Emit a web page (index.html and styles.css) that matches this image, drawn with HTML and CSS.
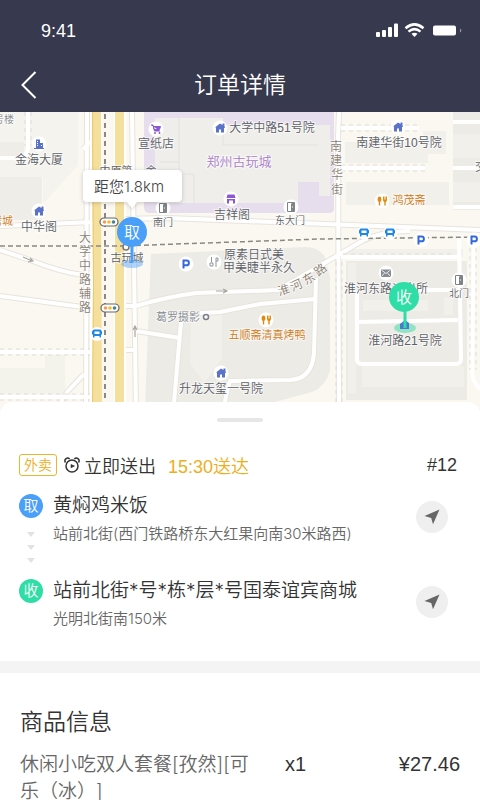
FILE: index.html
```html
<!DOCTYPE html>
<html lang="zh-CN">
<head>
<meta charset="utf-8">
<meta name="viewport" content="width=device-width, initial-scale=1">
<title>订单详情</title>
<link rel="stylesheet" href="styles.css">
</head>
<body>
<div class="app">
  <header class="top">
    <div class="status">
      <span class="time">9:41</span>
      <svg class="signals" width="86" height="16" viewBox="0 0 86 16" aria-hidden="true">
        <g fill="#fff">
          <rect x="0" y="9" width="4" height="5" rx="1"/>
          <rect x="6" y="7" width="4" height="7" rx="1"/>
          <rect x="12" y="4" width="4" height="10" rx="1"/>
          <rect x="18" y="0.500" width="4" height="13.500" rx="1"/>
          <rect x="57" y="2.500" width="23" height="10" rx="2"/>
          <path d="M84 5.500Q86.500 7.500 84 9.500z" opacity=".5"/>
          <path d="M38.500 14l-3-3.200q3-2 6 0z"/>
        </g>
        <path d="M29.500 5.200Q38.500-2.500 47.500 5.200M32.500 8.600Q38.500 3.600 44.500 8.600" fill="none" stroke="#fff" stroke-width="2.500"/>
      </svg>
    </div>
    <div class="nav">
      <button class="back" type="button" aria-label="返回">
        <svg width="16" height="28" viewBox="0 0 16 28"><path d="M14.500 1L1.500 14l13 13" fill="none" stroke="#fff" stroke-width="2"/></svg>
      </button>
      <h1>订单详情</h1>
    </div>
  </header>

  <main>
    <svg class="map" viewBox="0 112 480 302" preserveAspectRatio="xMidYMin slice" role="img" aria-label="配送地图">
      <defs>
        <g id="home"><circle r="7.500" fill="#fff"/><path d="M-5-.5L0-4.500 2.500-3v-1.500h2v3L5 0H4v4.500H1V1.500h-2v3h-3V-.5z" fill="#5b72c9"/></g>
        <g id="food"><circle r="7.500" fill="#fff"/><path d="M-2.500-4.500a2 2.800 0 0 1 .7 5.400V4.500h-1.400V.9a2 2.800 0 0 1 .7-5.400zM1-4.500h1v3h.5v-3h1v3H4v-3h1V-1Q5 .6 3.700 1v3.500H2.300V1Q1 .6 1-1z" fill="#e38a10"/></g>
        <g id="bus"><circle r="7" fill="#fff"/><path d="M-3.500-4.500h7L5-2.500v3H4v3H2.500V2h-5v1.500H-4v-3h-1v-3z" fill="#1e88e5"/><path d="M-2.500-2.500h5V0h-5z" fill="#fff"/></g>
        <g id="door"><circle r="7.500" fill="#fff"/><path d="M-3.500-4.500h7v9h-7z" fill="none" stroke="#7c8489"/><path d="M0-3.500l3.500-1v9H0z" fill="#7c8489"/><path d="M1 0h1" stroke="#fff"/></g>
        <g id="park"><circle r="7.500" fill="#fff"/><path d="M-2.500 4.500v-8h3a2.400 2.400 0 0 1 0 4.800h-3" fill="none" stroke="#3568d8" stroke-width="2"/></g>
        <g id="light"><rect x="-9" y="-4" width="18" height="8" rx="4" fill="#fff" stroke="#666" stroke-width="1.200"/><circle cx="-4.500" r="1.800" fill="#f49b5c"/><circle r="1.800" fill="#efbd35"/><circle cx="4.500" r="1.800" fill="#438393"/></g>
        <filter id="shade" x="-20%" y="-30%" width="140%" height="170%"><feDropShadow dx="0" dy="1" stdDeviation="2" flood-opacity=".2"/></filter>
      </defs>
      <path fill="#fbf8f1" d="M0 112h480v302H0z"/>

      <!-- blocks -->
      <path fill="#f4f3ed" d="M0 112h78v53L43 204v-27H0z"/>
      <path fill="#eeede7" d="M0 142h24v12l-8 4H0zM0 177h42v43H0z"/>
      <path fill="#f3f3ec" d="M0 368h45v-13h20v39H0z"/>
      <path fill="#e7deed" d="M144 112h190v97q0 4-5 4H150q-6 0-6-6z"/>
      <path fill="#efeeea" d="M155 118h68v7h107v71h-11v-14h-21v21H164q-9 0-9-8z"/>
      <path d="M179 118v44M160 162h19v12h15v29M223 125v20h96" fill="none" stroke="#e5e2e0"/>
      <path fill="#ecebe6" d="M151 254L305 247q14 0 20 10l5 20v94q-5 16-18 21l-52 14H145z"/>
      <path fill="#f1f0eb" d="M191 315h31v44l-18 24-14-20z"/>
      <path fill="#f1f0ea" d="M345 142h78v-11h23v23h-18v9h-83zM346 182h103v23H346zM346 249h117v8h-117z"/>
      <path fill="#ecebe5" d="M453 112h27v98h-27zM346 261h121v139H346z"/>
      <path fill="#f1f0ea" d="M453 134h27v24h-27zM453 182h27v20h-27zM362 366h102v21H362zM348 263h8v130h-8zM363 300h65v11h-65zM444 297h9v18h-9z"/>

      <!-- minor roads: grey edge under white surface -->
      <g id="streets" fill="none" stroke-linejoin="round">
        <g stroke="#e7e4dd" stroke-width="6">
          <path d="M87 112l-1 302M132 112l4 302M339 112l-1 25 1 277M0 226l93-4M124 219l42-1 160 6 154 6M0 250l30 10q30 12 53 15M0 296l90 12M124 306h12q30-9 60-13l82-3 62-36 22-13q20-10 48-10M136 331l44 7M124 350h12M84 374l-16 17-9 14M83 149l9-8"/>
          <path d="M316 278l-2 75q-2 26-24 27l-60 1q-5 15-6 30M200 313l20-1 40-8 55-5M181 322l-8 92"/>
        </g>
        <g stroke="#fff" stroke-width="4">
          <path d="M87 112l-1 302M132 112l4 302M339 112l-1 25 1 277M0 226l93-4M124 219l42-1 160 6 154 6M0 250l30 10q30 12 53 15M0 296l90 12M124 306h12q30-9 60-13l82-3 62-36 22-13q20-10 48-10M136 331l44 7M124 350h12M84 374l-16 17-9 14M83 149l9-8"/>
          <path d="M316 278l-2 75q-2 26-24 27l-60 1q-5 15-6 30M200 313l20-1 40-8 55-5M181 322l-8 92"/>
        </g>
        <path stroke="#fff" stroke-width="4" d="M357 290v69q0 5 5 5h94q5 0 5-5l-2-124M407 290h52M357 322l101-2M341 257h118M474 236l-2 135q0 12 10 19M0 352h92M0 397h92M28 112v35q0 11-12 11H0M453 122h27M453 168h27M453 207h27M341 128h78M341 168h84"/>
        <path stroke="#e0ddd6" stroke-dasharray="4 4" d="M0 349h92M0 355h92M0 394h92M0 400h92M25 112v34M31 112v34M470 240v130M476 240v130M343 254h112M336 262v140M342 262v140M341 125h78M341 131h78M341 165h84M341 171h84"/>
      </g>

      <!-- main road and railways -->
      <path fill="#fff" d="M90 112h36v302H90z"/>
      <path fill="#fbf8f1" d="M102 112h12v302h-12z"/>
      <path fill="#f5df9d" d="M92 112h9l1 302H92l1-130zM115 112h9v302h-9z"/>
      <path d="M92.500 112l1 172-1 130" stroke="#efc861" fill="none"/>
      <path d="M105 114v300" stroke="#888" stroke-width="2" stroke-dasharray="5 4"/>
      <path d="M0 246h120l200-7 160-2" fill="none" stroke="#898984" stroke-width="1.500" stroke-dasharray="5 3"/>
      <circle cx="126" cy="247" r="3" fill="#fff" stroke="#777" stroke-width="1.500"/>
      <path d="M216 291h10m-3-2l4 2-4 2M23 257l9 4m-2-3l3 3-5 1M135 337v-10m-2 3l2-4 2 4" fill="none" stroke="#aaa59e" stroke-width="1.200"/>

      <use href="#light" x="109" y="222"/><use href="#light" x="110" y="308"/>
      <use href="#home" x="39" y="211"/><use href="#home" x="220" y="128"/><use href="#home" x="398" y="127"/><use href="#home" x="221" y="373"/>
      <use href="#food" x="382" y="201"/><use href="#food" x="266" y="320"/>
      <use href="#bus" x="97" y="334"/><use href="#bus" x="364" y="233"/><use href="#bus" x="390" y="233"/>
      <use href="#door" x="163" y="208"/><use href="#door" x="291" y="207"/><use href="#door" x="459" y="280"/>
      <use href="#park" x="186" y="264"/><use href="#park" x="421" y="240"/><use href="#park" x="474" y="240"/>
      <g transform="translate(39 144)"><circle r="7.500" fill="#fff"/><path d="M-3-4.500h4V-1h3v5h1v1H-5V4h2z" fill="#5b72c9"/><path d="M-1.500-3v6M2.500 1v2" stroke="#fff" stroke-dasharray="1 1"/></g>
      <g transform="translate(156 129)"><circle r="7.500" fill="#fff"/><path d="M-5-4h2l1.500 6h5.500M-2.500-2.500h7l-1 3h-5.500z" fill="#8b58d2" stroke="#8b58d2"/><circle cx="-1" cy="4" r="1" fill="#8b58d2"/><circle cx="3.500" cy="4" r="1" fill="#8b58d2"/></g>
      <g transform="translate(231 199)"><circle r="7.500" fill="#fff"/><path d="M-3.500-4.500h7L4.500-1h-9zM-4 0h8v4.500H2v-3h-4v3h-2z" fill="#8b58d2"/></g>
      <g transform="translate(214 262)"><circle r="7.500" fill="#fff"/><path d="M-2.500-5v5m-1.500 4V1h3v3zM2 5v-9h2v3H2" fill="none" stroke="#8f969b"/></g>
      <g transform="translate(386 273)"><circle r="7.500" fill="#fff"/><path d="M-5-3.500H5v7.500H-5z" fill="#868c91"/><path d="M-4.500-3L0 .5 4.500-3M-4.500 3.500L-1.500 0M4.500 3.500L1.500 0" fill="none" stroke="#fff" stroke-width=".8"/></g>
      <circle cx="206" cy="317" r="2.500" fill="#fff" stroke="#798087" stroke-width="1.500"/>

      <g class="labels">
        <text x="39" y="164">金海大厦</text><text x="39" y="231">中华阁</text>
        <text x="156" y="148">宣纸店</text><text x="272" y="132">大学中路51号院</text>
        <text x="232" y="219">吉祥阁</text><text x="399" y="147">南建华街10号院</text>
        <text x="254" y="259">原素日式美</text><text x="259" y="272">甲美睫半永久</text>
        <text x="221" y="393">升龙天玺一号院</text><text x="386" y="293">淮河东路派出所</text>
        <text x="405" y="345">淮河路21号院</text><text x="127" y="262" class="s11">古玩城</text>
        <text x="116" y="175" class="s11">中原第</text><text x="151" y="175" class="s11">金</text>
        <text x="290" y="224" class="s10">东大门</text><text x="163" y="226" class="s10">南门</text>
        <text x="459" y="297" class="s10">北门</text><text x="481" y="171">交</text>
        <text x="4" y="123" class="s10 pale">号楼</text><text x="178" y="321" class="s11 pale">葛罗摄影</text>
        <text x="239" y="166" class="s13 violet">郑州古玩城</text>
        <text x="2" y="225" class="s11 orange">烤城</text><text x="409" y="204" class="s11 orange">鸿茂斋</text>
        <text x="267" y="339" class="s11 orange">五顺斋清真烤鸭</text>
        <g class="street">
          <text x="85" y="242">大</text><text x="85" y="256">学</text><text x="85" y="270">中</text><text x="85" y="284">路</text><text x="85" y="298">辅</text><text x="85" y="312">路</text>
          <text x="336" y="151">南</text><text x="336" y="165">建</text><text x="337" y="179">华</text><text x="337" y="194">街</text>
          <text transform="translate(285 294) rotate(-18)">淮</text><text transform="translate(298 289) rotate(-24)">河</text><text transform="translate(311 282) rotate(-32)">东</text><text transform="translate(323 273) rotate(-38)">路</text>
        </g>
      </g>

      <!-- pick-up and delivery pins -->
      <ellipse cx="132" cy="264" rx="11" ry="4" fill="#4a9ff8" opacity=".45"/>
      <path d="M132 240v23" stroke="#4a9ff8" stroke-width="3"/>
      <circle cx="132" cy="232" r="15" fill="#4a9ff8"/>
      <text class="pin" x="132" y="238">取</text>
      <ellipse cx="405" cy="328" rx="11" ry="5" fill="#34dba6" opacity=".5"/>
      <path d="M400 324l5-4 4 3v6h-9z" fill="#4c78d0"/>
      <path d="M405 304v24" stroke="#2fdda6" stroke-width="3"/>
      <circle cx="404" cy="297" r="15" fill="#2fdda6"/>
      <text class="pin" x="404" y="303">收</text>
      <path filter="url(#shade)" fill="#fff" d="M87 170h90q5 0 5 5v22q0 5-5 5h-40l-5 6-5-6H87q-4 0-4-4v-24q0-4 4-4z"/>
      <text class="distance" x="94" y="192">距您1.8km</text>
    </svg>

    <section class="sheet">
      <div class="handle"></div>
      <div class="summary">
        <span class="tag">外卖</span>
        <svg class="clock" width="16" height="16" viewBox="0 0 16 16" fill="none" stroke="#333" stroke-width="1.500" aria-hidden="true"><circle cx="8" cy="9" r="6"/><path d="M1.500 5.500Q0 3.200 2 1.700T5.600 2M14.500 5.500Q16 3.200 14 1.700T10.400 2"/><path d="M7 7.500v3.300L10.500 9z" fill="#333" stroke-width=".6"/></svg>
        <span class="send">立即送出</span>
        <span class="eta">15:30送达</span>
        <span class="number">#12</span>
      </div>
      <div class="stop">
        <span class="dot take">取</span>
        <div class="place"><h2>黄焖鸡米饭</h2><p>站前北街(西门铁路桥东大红果向南30米路西)</p></div>
        <button class="go" type="button" aria-label="导航到取货点"><svg width="16" height="16" viewBox="0 0 16 16"><path d="M15.500.5L9 15.300 7.200 9 .5 7z" fill="#666"/></svg></button>
        <svg class="steps" width="8" height="31" viewBox="0 0 8 31" fill="#e2e2e2" aria-hidden="true"><path d="M0 0h8L4 5zM0 13h8l-4 5zM0 26h8l-4 5z"/></svg>
      </div>
      <div class="stop">
        <span class="dot give">收</span>
        <div class="place"><h2>站前北街*号*栋*层*号国泰谊宾商城</h2><p>光明北街南150米</p></div>
        <button class="go" type="button" aria-label="导航到收货点"><svg width="16" height="16" viewBox="0 0 16 16"><path d="M15.500.5L9 15.300 7.200 9 .5 7z" fill="#666"/></svg></button>
      </div>
    </section>

    <section class="goods">
      <h2>商品信息</h2>
      <div class="item">
        <span class="name">休闲小吃双人套餐[孜然][可乐（冰）]</span>
        <span class="count">x1</span>
        <span class="price">¥27.46</span>
      </div>
    </section>
  </main>
</div>
</body>
</html>
```
FILE: styles.css
```css
* { box-sizing: border-box; }
body, h1, h2, p { margin: 0; }
body {
  background: #fff;
  color: #333;
  font-family: "Liberation Sans", "Noto Sans CJK SC", sans-serif;
  font-weight: 350;
}
h1, h2 { font-weight: 350; }
button { border: 0; padding: 0; cursor: pointer; }
svg { display: block; }
.top { background: #37394e; color: #fff; }
.status {
  display: flex;
  align-items: center;
  justify-content: space-between;
  height: 58px;
  padding: 4px 18px 0 41px;
}
.time { font-size: 18px; }
.nav {
  display: grid;
  grid-template-columns: 40px 1fr 40px;
  align-items: center;
  height: 54px;
  padding: 0 21px;
}
.nav h1 { font-size: 23px; line-height: 32px; text-align: center; }
.back { width: 40px; height: 32px; background: none; display: flex; align-items: center; }
.map { width: 100%; height: 302px; }
.labels text { font-size: 12px; fill: #5b6066; text-anchor: middle; stroke: #fff; stroke-width: 2px; stroke-opacity: .6; paint-order: stroke; }
.labels .s10 { font-size: 10px; }
.labels .s11 { font-size: 11px; }
.labels .s13 { font-size: 13px; }
.labels .pale { fill: #858b91; }
.labels .violet { fill: #a87cc8; }
.labels .orange { fill: #d07a14; }
.labels .street text { fill: #8c8276; }
.pin { font-size: 16px; fill: #fff; text-anchor: middle; }
.distance { font-family: Inter, "Noto Sans CJK SC", sans-serif; font-size: 15px; font-weight: 350; fill: #444; }
.sheet {
  position: relative;
  margin-top: -12px;
  padding: 16px 20px 29px 19px;
  background: #fff;
  border-radius: 12px 12px 0 0;
  border-bottom: 12px solid #f4f4f4;
}
.handle { width: 46px; height: 4px; margin: 0 auto 28px; border-radius: 2px; background: #e6e6e6; }
.summary { display: flex; align-items: center; height: 30px; font-size: 18px; }
.tag {
  width: 38px;
  height: 22px;
  border: 1px solid #edb52d;
  border-radius: 3px;
  color: #edae1c;
  font-size: 14px;
  line-height: 20px;
  text-align: center;
}
.clock { margin: 0 4px 0 7px; }
.eta { margin-left: 12px; color: #edae1c; }
.number { margin-left: auto; padding-right: 3px; }
.stop {
  display: grid;
  grid-template-columns: 24px 1fr 32px;
  column-gap: 10px;
  align-items: start;
  position: relative;
  min-height: 85px;
  padding: 10px 12px 0 0;
}
.stop + .stop { min-height: 0; }
.dot {
  width: 24px;
  height: 24px;
  margin-top: 4px;
  border-radius: 50%;
  color: #fff;
  font-size: 15px;
  line-height: 24px;
  text-align: center;
}
.take { background: #4a9ff8; }
.give { background: #2fdda6; }
.place { padding-top: 2px; font-family: Inter, "Noto Sans CJK SC", sans-serif; }
.place h2 { font-size: 19px; line-height: 28px; white-space: nowrap; }
.place p { margin-top: 1px; font-size: 15px; line-height: 26px; color: #666; }
.go {
  width: 32px;
  height: 32px;
  margin-top: 11px;
  border-radius: 50%;
  background: #efefef;
  display: flex;
  align-items: center;
  justify-content: center;
}
.steps { position: absolute; left: 8px; top: 52px; }
.goods { padding: 33px 20px 0; }
.goods h2 { font-size: 23px; line-height: 32px; }
.item {
  display: grid;
  grid-template-columns: 236px 1fr auto;
  column-gap: 29px;
  margin-top: 13px;
  font-size: 20px;
  line-height: 27px;
}
.name {
  font-family: Inter, "Noto Sans CJK SC", sans-serif;
  font-size: 19px;
  color: #666;
  text-spacing-trim: space-all;
}
```
